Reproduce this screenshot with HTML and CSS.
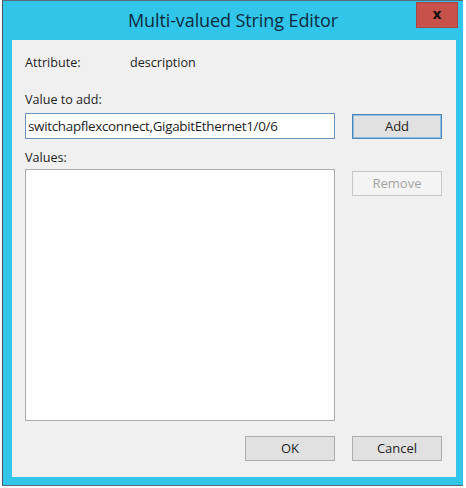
FILE: index.html
```html
<!DOCTYPE html>
<html>
<head>
<meta charset="utf-8">
<link rel="stylesheet" href="styles.css">
</head>
<body>
<div class="window">
  <div class="titlebar">
    <div class="title">Multi-valued String Editor</div>
    <div class="close">x</div>
  </div>
  <div class="content">
    <div class="attr-row">
      <span class="attr-label">Attribute:</span>
      <span class="attr-value">description</span>
    </div>
    <div class="label add-label">Value to add:</div>
    <div class="row">
      <div class="textbox">switchapflexconnect,GigabitEthernet1/0/6</div>
      <div class="btn btn-default">Add</div>
    </div>
    <div class="label values-label">Values:</div>
    <div class="row list-row">
      <div class="listbox"></div>
      <div class="btn btn-disabled">Remove</div>
    </div>
    <div class="footer">
      <div class="btn">OK</div>
      <div class="btn">Cancel</div>
    </div>
  </div>
</div>
</body>
</html>
```

FILE: styles.css
```css
html, body {
  margin: 0;
  padding: 0;
  background: #ffffff;
}
body {
  width: 466px;
  height: 488px;
  overflow: hidden;
  font-family: "Open Sans", "Noto Sans", sans-serif;
  color: #1e1e1e;
}
.window {
  margin-left: 2px;
  width: 460px;
  height: 484px;
  background: #31c6e9;
  border-left: 1px solid #4a5a66;
  border-top: 1px solid #5a6a76;
  border-bottom: 1px solid #5a6a76;
  display: flex;
  flex-direction: column;
}
.titlebar {
  height: 39px;
  display: flex;
  align-items: center;
  justify-content: center;
  position: relative;
}
.title {
  font-size: 18px;
  color: #0f2a40;
  letter-spacing: -0.1px;
  margin-top: -2px;
}
.close {
  position: absolute;
  left: 413px;
  top: 1px;
  width: 42px;
  height: 26px;
  background: #c9514c;
  border: 1px solid #a94440;
  box-sizing: border-box;
  color: #111;
  font-family: "DejaVu Sans", sans-serif;
  font-weight: bold;
  font-size: 14px;
  line-height: 22px;
  text-align: center;
}
.content {
  margin: 0 7px 0 9px;
  height: 437px;
  background: #f0f0f0;
  padding: 0 0 0 13px;
  display: flex;
  flex-direction: column;
  font-size: 12.6px;
}
.attr-row {
  margin-top: 14px;
  height: 16px;
  display: flex;
  align-items: center;
}
.attr-label {
  width: 105px;
}
.label {
  height: 16px;
  line-height: 16px;
}
.add-label {
  margin-top: 22px;
}
.row {
  display: flex;
  gap: 17px;
  align-items: flex-start;
}
.add-label + .row {
  margin-top: 5px;
}
.textbox {
  width: 310px;
  height: 26px;
  box-sizing: border-box;
  border: 1px solid #6d94bd;
  background: #fff;
  padding: 0 2px;
  line-height: 24px;
  font-size: 13.4px;
  letter-spacing: -0.3px;
  white-space: nowrap;
  overflow: hidden;
}
.btn {
  width: 90px;
  height: 25px;
  box-sizing: border-box;
  border: 1px solid #adadad;
  background: #e1e1e1;
  text-align: center;
  line-height: 23px;
  font-size: 13px;
}
.btn-default {
  border-color: #4a86b8;
  box-shadow: inset 0 0 0 1px #8fbde0;
  margin-top: 1px;
}
.btn-disabled {
  border-color: #c8c8c8;
  background: #f4f4f4;
  color: #a3a3a3;
  margin-top: 2px;
}
.values-label {
  margin-top: 11px;
}
.list-row {
  margin-top: 3px;
}
.listbox {
  width: 310px;
  height: 252px;
  box-sizing: border-box;
  border: 1px solid #acacac;
  background: #fff;
}
.footer {
  margin-top: 15px;
  display: flex;
  justify-content: flex-end;
  gap: 17px;
  padding-right: 14px;
}
```
